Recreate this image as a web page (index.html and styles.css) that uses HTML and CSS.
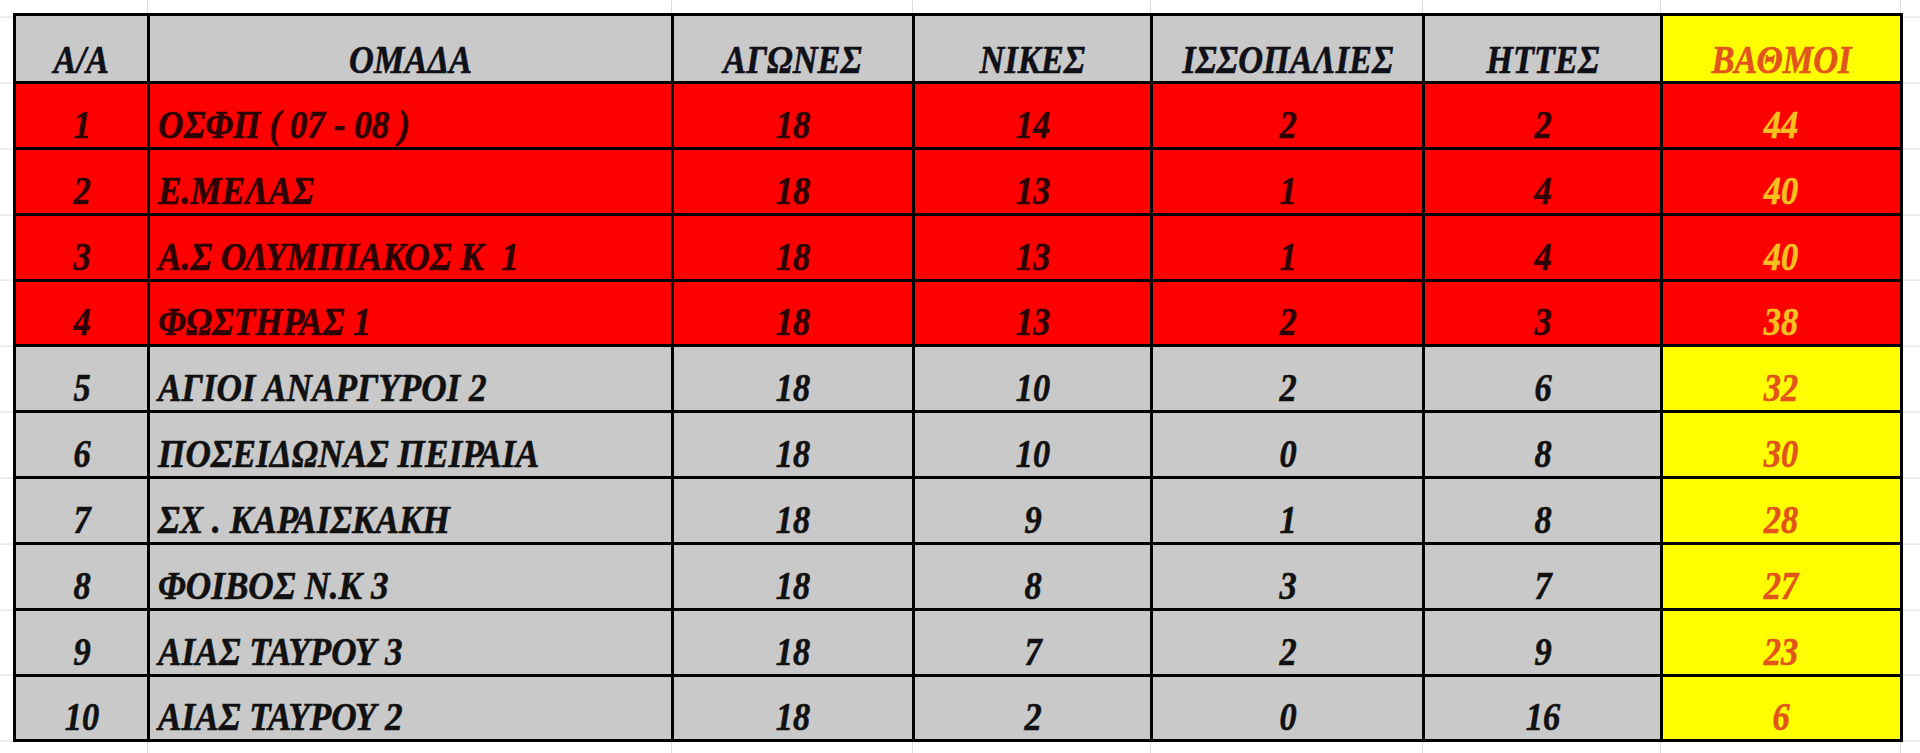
FILE: index.html
```html
<!DOCTYPE html>
<html lang="el">
<head>
<meta charset="utf-8">
<title>Βαθμολογία</title>
<link rel="stylesheet" href="styles.css">
</head>
<body>
<table class="standings">
  <colgroup>
    <col class="c-pos"><col class="c-team"><col class="c-played"><col class="c-wins"><col class="c-draws"><col class="c-losses"><col class="c-points">
  </colgroup>
  <thead>
    <tr class="head">
      <th><span class="t">Α/Α</span></th>
      <th><span class="t">ΟΜΑΔΑ</span></th>
      <th><span class="t">ΑΓΩΝΕΣ</span></th>
      <th><span class="t">ΝΙΚΕΣ</span></th>
      <th><span class="t">ΙΣΣΟΠΑΛΙΕΣ</span></th>
      <th><span class="t">ΗΤΤΕΣ</span></th>
      <th class="pts"><span class="t">ΒΑΘΜΟΙ</span></th>
    </tr>
  </thead>
  <tbody>
    <tr class="top"><td><span class="t">1</span></td><td class="team"><span class="t">ΟΣΦΠ ( 07 - 08 )</span></td><td><span class="t">18</span></td><td><span class="t">14</span></td><td><span class="t">2</span></td><td><span class="t">2</span></td><td class="pts"><span class="t">44</span></td></tr>
    <tr class="top"><td><span class="t">2</span></td><td class="team"><span class="t">Ε.ΜΕΛΑΣ</span></td><td><span class="t">18</span></td><td><span class="t">13</span></td><td><span class="t">1</span></td><td><span class="t">4</span></td><td class="pts"><span class="t">40</span></td></tr>
    <tr class="top"><td><span class="t">3</span></td><td class="team"><span class="t">Α.Σ ΟΛΥΜΠΙΑΚΟΣ Κ&nbsp; 1</span></td><td><span class="t">18</span></td><td><span class="t">13</span></td><td><span class="t">1</span></td><td><span class="t">4</span></td><td class="pts"><span class="t">40</span></td></tr>
    <tr class="top"><td><span class="t">4</span></td><td class="team"><span class="t">ΦΩΣΤΗΡΑΣ 1</span></td><td><span class="t">18</span></td><td><span class="t">13</span></td><td><span class="t">2</span></td><td><span class="t">3</span></td><td class="pts"><span class="t">38</span></td></tr>
    <tr><td><span class="t">5</span></td><td class="team"><span class="t">ΑΓΙΟΙ ΑΝΑΡΓΥΡΟΙ 2</span></td><td><span class="t">18</span></td><td><span class="t">10</span></td><td><span class="t">2</span></td><td><span class="t">6</span></td><td class="pts"><span class="t">32</span></td></tr>
    <tr><td><span class="t">6</span></td><td class="team"><span class="t">ΠΟΣΕΙΔΩΝΑΣ ΠΕΙΡΑΙΑ</span></td><td><span class="t">18</span></td><td><span class="t">10</span></td><td><span class="t">0</span></td><td><span class="t">8</span></td><td class="pts"><span class="t">30</span></td></tr>
    <tr><td><span class="t">7</span></td><td class="team"><span class="t">ΣΧ . ΚΑΡΑΙΣΚΑΚΗ</span></td><td><span class="t">18</span></td><td><span class="t">9</span></td><td><span class="t">1</span></td><td><span class="t">8</span></td><td class="pts"><span class="t">28</span></td></tr>
    <tr><td><span class="t">8</span></td><td class="team"><span class="t">ΦΟΙΒΟΣ Ν.Κ 3</span></td><td><span class="t">18</span></td><td><span class="t">8</span></td><td><span class="t">3</span></td><td><span class="t">7</span></td><td class="pts"><span class="t">27</span></td></tr>
    <tr><td><span class="t">9</span></td><td class="team"><span class="t">ΑΙΑΣ ΤΑΥΡΟΥ 3</span></td><td><span class="t">18</span></td><td><span class="t">7</span></td><td><span class="t">2</span></td><td><span class="t">9</span></td><td class="pts"><span class="t">23</span></td></tr>
    <tr><td><span class="t">10</span></td><td class="team"><span class="t">ΑΙΑΣ ΤΑΥΡΟΥ 2</span></td><td><span class="t">18</span></td><td><span class="t">2</span></td><td><span class="t">0</span></td><td><span class="t">16</span></td><td class="pts"><span class="t">6</span></td></tr>
  </tbody>
</table>
</body>
</html>
```
FILE: styles.css
```css
html, body {
  margin: 0;
  padding: 0;
}
body {
  width: 1920px;
  height: 753px;
  overflow: hidden;
  background-color: #ffffff;
  background-image:
    linear-gradient(to right,
      transparent 0 147px, #dcdcdc 147px 148px,
      transparent 148px 671px, #dcdcdc 671px 672px,
      transparent 672px 912px, #dcdcdc 912px 913px,
      transparent 913px 1150px, #dcdcdc 1150px 1151px,
      transparent 1151px 1422px, #dcdcdc 1422px 1423px,
      transparent 1423px 1660px, #dcdcdc 1660px 1661px,
      transparent 1661px 1900px, #dcdcdc 1900px 1901px,
      transparent 1901px),
    repeating-linear-gradient(to bottom,
      #dcdcdc 0 1px, transparent 1px 65.85px);
  background-position: 0 0, 0 16.6px;
  font-family: "Liberation Serif", "Times New Roman", serif;
}
.standings {
  margin: 13px 0 0 13px;
  border-collapse: collapse;
  table-layout: fixed;
  width: 1886.5px;
}
.c-pos { width: 134px; }
.c-team { width: 524px; }
.c-played { width: 241px; }
.c-wins { width: 238px; }
.c-draws { width: 272px; }
.c-losses { width: 238px; }
.c-points { width: 239.5px; }

.standings th,
.standings td {
  border: 3px solid #000000;
  padding: 0 0 2px 0;
  text-align: center;
  vertical-align: bottom;
  font-size: 40px;
  line-height: 40px;
  font-weight: bold;
  font-style: italic;
  white-space: nowrap;
  overflow: hidden;
  -webkit-text-stroke: 0.6px currentColor;
}
.standings tr { height: 65.85px; }
.standings tr.head { height: 68px; }

.head th {
  background: #c9c9c9;
  color: #101018;
  padding-bottom: 1px;
}
.head th.pts {
  background: #ffff00;
  color: #e2531d;
}
tbody tr td {
  background: #c9c9c9;
  color: #111111;
}
tbody tr td.pts {
  background: #ffff00;
  color: #e2531d;
}
tbody tr.top td {
  background: #ff0000;
  color: #2c0204;
}
tbody tr.top td.pts {
  color: #f6c11f;
}
.t {
  display: inline-block;
  transform: scaleX(0.86);
  transform-origin: center bottom;
}
td.team {
  text-align: left;
  padding-left: 8px;
}
td.team .t {
  transform: scaleX(0.88);
  transform-origin: left bottom;
}
```
